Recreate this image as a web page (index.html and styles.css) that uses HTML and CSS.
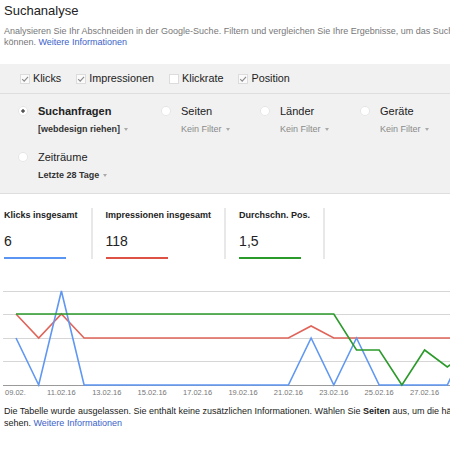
FILE: index.html
```html
<!DOCTYPE html>
<html lang="de">
<head>
<meta charset="utf-8">
<title>Suchanalyse</title>
<link rel="stylesheet" href="styles.css">
</head>
<body>
<div class="page">
  <header class="head">
    <h1 class="title">Suchanalyse</h1>
    <p class="desc">Analysieren Sie Ihr Abschneiden in der Google-Suche. Filtern und vergleichen Sie Ihre Ergebnisse, um das Suchverhalten der Nutzer besser verstehen zu<br>können. <a class="link" href="#">Weitere Informationen</a></p>
  </header>

  <div class="metrics">
    <label class="check"><svg class="box" viewBox="0 0 10 10" width="10" height="10"><rect x="0.5" y="0.5" width="9" height="9" fill="#fafafa" stroke="#dcdcdc"/><path d="M2.2 5.2 L4.2 7.2 L8 2.8" fill="none" stroke="#8a8a8a" stroke-width="1.1"/></svg>Klicks</label>
    <label class="check"><svg class="box" viewBox="0 0 10 10" width="10" height="10"><rect x="0.5" y="0.5" width="9" height="9" fill="#fafafa" stroke="#dcdcdc"/><path d="M2.2 5.2 L4.2 7.2 L8 2.8" fill="none" stroke="#8a8a8a" stroke-width="1.1"/></svg>Impressionen</label>
    <label class="check"><svg class="box" viewBox="0 0 10 10" width="10" height="10"><rect x="0.5" y="0.5" width="9" height="9" fill="#fff" stroke="#dcdcdc"/></svg>Klickrate</label>
    <label class="check"><svg class="box" viewBox="0 0 10 10" width="10" height="10"><rect x="0.5" y="0.5" width="9" height="9" fill="#fafafa" stroke="#dcdcdc"/><path d="M2.2 5.2 L4.2 7.2 L8 2.8" fill="none" stroke="#8a8a8a" stroke-width="1.1"/></svg>Position</label>
  </div>

  <div class="filters">
    <div class="filter">
      <span class="radio on"></span>
      <div>
        <div class="f-name active">Suchanfragen</div>
        <div class="f-value set">[webdesign riehen]<i class="caret"></i></div>
      </div>
    </div>
    <div class="filter">
      <span class="radio"></span>
      <div>
        <div class="f-name">Seiten</div>
        <div class="f-value">Kein Filter<i class="caret"></i></div>
      </div>
    </div>
    <div class="filter">
      <span class="radio"></span>
      <div>
        <div class="f-name">Länder</div>
        <div class="f-value">Kein Filter<i class="caret"></i></div>
      </div>
    </div>
    <div class="filter">
      <span class="radio"></span>
      <div>
        <div class="f-name">Geräte</div>
        <div class="f-value">Kein Filter<i class="caret"></i></div>
      </div>
    </div>
    <div class="filter">
      <span class="radio"></span>
      <div>
        <div class="f-name">Zeiträume</div>
        <div class="f-value set">Letzte 28 Tage<i class="caret"></i></div>
      </div>
    </div>
  </div>

  <div class="stats">
    <div class="stat">
      <div class="stat-label">Klicks insgesamt</div>
      <div class="stat-value">6</div>
      <div class="stat-bar blue"></div>
    </div>
    <div class="stat">
      <div class="stat-label">Impressionen insgesamt</div>
      <div class="stat-value">118</div>
      <div class="stat-bar red"></div>
    </div>
    <div class="stat">
      <div class="stat-label">Durchschn. Pos.</div>
      <div class="stat-value">1,5</div>
      <div class="stat-bar green"></div>
    </div>
  </div>

  <svg class="chart" width="800" height="116" viewBox="0 0 800 116">
    <g class="grid">
      <line x1="3" y1="9.5" x2="800" y2="9.5"/>
      <line x1="3" y1="32.5" x2="800" y2="32.5"/>
      <line x1="3" y1="56.5" x2="800" y2="56.5"/>
      <line x1="3" y1="79.5" x2="800" y2="79.5"/>
    </g>
    <line class="base" x1="3" y1="103.5" x2="800" y2="103.5"/>
    <polyline class="ln red" points="16,32 38.7,56 61.4,32 84.1,56 288.4,56 311.1,44 333.8,56 800,56"/>
    <polyline class="ln blue" points="16,56 38.7,103 61.4,9 84.1,103 288.4,103 311.1,56 333.8,103 356.5,56 379.2,103 447.3,103 470,56 492.7,103 800,103"/>
    <polyline class="ln green" points="16,32 333.8,32 356.5,68 379.2,68 401.9,103 424.6,68 447.3,85 470,68 492.7,68 800,68"/>
    <g class="axis">
      <text x="5" y="113">09.02.</text>
      <text x="61.4" y="113" text-anchor="middle">11.02.16</text>
      <text x="106.8" y="113" text-anchor="middle">13.02.16</text>
      <text x="152.2" y="113" text-anchor="middle">15.02.16</text>
      <text x="197.6" y="113" text-anchor="middle">17.02.16</text>
      <text x="243" y="113" text-anchor="middle">19.02.16</text>
      <text x="288.4" y="113" text-anchor="middle">21.02.16</text>
      <text x="333.8" y="113" text-anchor="middle">23.02.16</text>
      <text x="379.2" y="113" text-anchor="middle">25.02.16</text>
      <text x="424.6" y="113" text-anchor="middle">27.02.16</text>
    </g>
  </svg>

  <p class="note">Die Tabelle wurde ausgelassen. Sie enthält keine zusätzlichen Informationen. Wählen Sie <b>Seiten</b> aus, um die häufigsten Seiten zu<br>sehen. <a class="link" href="#">Weitere Informationen</a></p>
</div>
</body>
</html>
```
FILE: styles.css
```css
html, body {
  margin: 0;
  padding: 0;
  overflow: hidden;
  background: #fff;
}

body {
  font-family: "Liberation Sans", Arial, sans-serif;
  color: #222;
}

.page {
  width: 800px;
}

.head {
  padding: 2px 0 0 4px;
}

.title {
  margin: 0;
  font-size: 13px;
  font-weight: normal;
  line-height: 17px;
  color: #222;
}

.desc {
  margin: 7px 0 0;
  font-size: 9px;
  line-height: 11px;
  color: #777;
  white-space: nowrap;
}

.link {
  color: #3b62c9;
  text-decoration: none;
}

.metrics {
  margin-top: 16px;
  display: flex;
  gap: 15px;
  padding: 8px 0 8px 20px;
  background: #f1f1f1;
  border-bottom: 1px solid #dedede;
  font-size: 10.8px;
  line-height: 13px;
  color: #222;
}

.check {
  display: flex;
  align-items: center;
  gap: 3px;
}

.box {
  display: block;
}

.filters {
  display: grid;
  grid-template-columns: 143px 99px 100px 100px;
  row-gap: 15px;
  padding: 10px 0 12px 18px;
  background: #f1f1f1;
  border-bottom: 1px solid #dedede;
}

.filter {
  display: flex;
  align-items: flex-start;
  gap: 10px;
}

.radio {
  flex: none;
  width: 10px;
  height: 10px;
  margin-top: 2px;
  border-radius: 50%;
  background: #fff;
  box-shadow: inset 0 0 0 1px #e4e4e4;
}

.radio.on {
  background: radial-gradient(circle, #555 0 1.4px, #fff 2px);
}

.f-name {
  font-size: 11px;
  line-height: 14px;
  color: #222;
}

.f-name.active {
  font-weight: bold;
}

.f-value {
  margin-top: 5px;
  font-size: 9px;
  line-height: 12px;
  color: #8a8a8a;
  white-space: nowrap;
}

.f-value.set {
  color: #333;
  font-weight: bold;
}

.caret {
  display: inline-block;
  margin-left: 4px;
  vertical-align: middle;
  border-left: 2.5px solid transparent;
  border-right: 2.5px solid transparent;
  border-top: 3px solid #aaa;
}

.stats {
  display: flex;
  margin-top: 14px;
  padding-left: 4px;
}

.stat {
  padding: 2px 13px 0 13px;
  border-right: 2px solid #e8e8e8;
}

.stat:first-child {
  padding-left: 0;
}

.stat-label {
  font-size: 9px;
  font-weight: bold;
  line-height: 11px;
  color: #222;
  white-space: nowrap;
}

.stat-value {
  margin-top: 12px;
  font-size: 14px;
  line-height: 17px;
  color: #222;
}

.stat-bar {
  margin-top: 7px;
  width: 62px;
  height: 2px;
}

.stat-bar.blue { background: #5b95f4; }
.stat-bar.red { background: #de5246; }
.stat-bar.green { background: #2a9a2a; }

.chart {
  display: block;
  margin-top: 23px;
}

.grid line {
  stroke: #d6d6d6;
  stroke-width: 1;
}

.base {
  stroke: #9a9a9a;
  stroke-width: 1;
}

.ln {
  fill: none;
  stroke-width: 1.6;
  stroke-linejoin: miter;
}

.ln.red { stroke: #e0645a; }
.ln.blue { stroke: #5f97f2; }
.ln.green { stroke: #2b9a2b; }

.axis text {
  font-family: "Liberation Sans", Arial, sans-serif;
  font-size: 7.5px;
  fill: #777;
}

.note {
  margin: 8px 0 0;
  padding-left: 4px;
  font-size: 9px;
  line-height: 11.5px;
  color: #222;
  white-space: nowrap;
}
```
